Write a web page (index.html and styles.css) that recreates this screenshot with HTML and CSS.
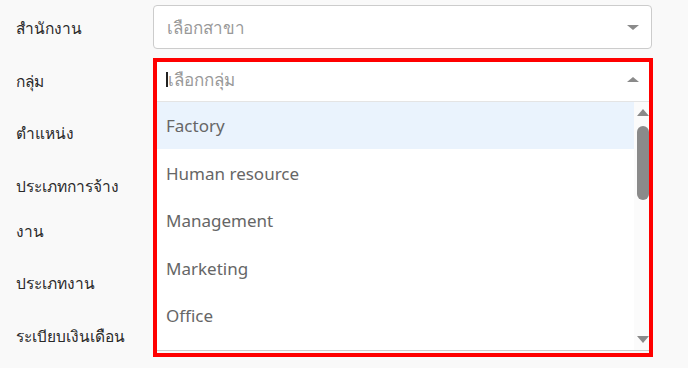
FILE: index.html
```html
<!DOCTYPE html>
<html lang="th">
<head>
<meta charset="utf-8">
<link rel="stylesheet" href="styles.css">
</head>
<body>
<div class="form">
  <div class="row">
    <div class="label">สำนักงาน</div>
    <div class="field">
      <div class="select"><span class="ph">เลือกสาขา</span><span class="caret down"></span></div>
    </div>
  </div>
  <div class="row">
    <div class="label">กลุ่ม</div>
    <div class="field open">
      <div class="select"><span class="value"><span class="cursor"></span><span class="ph">เลือกกลุ่ม</span></span><span class="caret up"></span></div>
      <div class="dropdown">
        <div class="list">
          <div class="item active">Factory</div>
          <div class="item">Human resource</div>
          <div class="item">Management</div>
          <div class="item">Marketing</div>
          <div class="item">Office</div>
        </div>
        <div class="scrollbar">
          <div class="sb-btn top"><span class="tri tri-up"></span></div>
          <div class="thumb"></div>
          <div class="sb-track"></div>
          <div class="sb-btn bottom"><span class="tri tri-down"></span></div>
        </div>
      </div>
      <div class="highlight"></div>
    </div>
  </div>
  <div class="row"><div class="label">ตำแหน่ง</div></div>
  <div class="row"><div class="label">ประเภทการจ้าง<br>งาน</div></div>
  <div class="row"><div class="label">ประเภทงาน</div></div>
  <div class="row"><div class="label">ระเบียบเงินเดือน</div></div>
</div>
</body>
</html>
```

FILE: styles.css
```css
html, body {
  margin: 0;
  background: #f9f9f9;
  font-family: "Noto Sans", "Liberation Sans", sans-serif;
}
.form {
  display: flex;
  flex-direction: column;
  gap: 6.5px;
  padding: 5px 36px 0 16px;
}
.row {
  display: flex;
  min-height: 46px;
}
.label {
  width: 137px;
  flex: none;
  font-size: 15.5px;
  line-height: 45px;
  padding-top: 1px;
  color: #2a2a2a;
}
.field {
  flex: 1;
  position: relative;
}
.select {
  height: 44px;
  box-sizing: border-box;
  border: 1px solid #cccccc;
  border-radius: 4px;
  background: #fff;
  display: flex;
  align-items: center;
  justify-content: space-between;
  padding: 0 12px 0 13px;
}
.value {
  display: flex;
  align-items: center;
}
.ph {
  color: #999;
  font-size: 17px;
}
.cursor {
  width: 2px;
  height: 15px;
  background: #222;
  margin-left: -1px;
}
.caret {
  width: 0;
  height: 0;
  border-left: 6px solid transparent;
  border-right: 6px solid transparent;
}
.caret.down { border-top: 5px solid #8a8a8a; }
.caret.up { border-bottom: 5px solid #8a8a8a; }
.open .select {
  border-radius: 4px 4px 0 0;
  border-bottom-color: #e4e4e4;
}
.dropdown {
  position: absolute;
  top: 44px;
  left: 0;
  right: 0;
  height: 249px;
  box-sizing: border-box;
  background: #fff;
  border: 1px solid #cccccc;
  border-top: none;
  display: flex;
  z-index: 2;
}
.list {
  flex: 1;
  overflow: hidden;
}
.item {
  height: 47.5px;
  box-sizing: border-box;
  display: flex;
  align-items: center;
  padding: 1px 0 0 12px;
  font-size: 17px;
  color: #666;
}
.item.active {
  background: #eaf3fd;
}
.scrollbar {
  width: 17px;
  flex: none;
  display: flex;
  flex-direction: column;
  align-items: center;
  background: #fbfbfb;
}
.sb-btn {
  display: flex;
  align-items: center;
  justify-content: center;
  width: 100%;
}
.sb-btn.top { height: 22px; }
.sb-btn.bottom { height: 21px; }
.tri {
  width: 0;
  height: 0;
  border-left: 6px solid transparent;
  border-right: 6px solid transparent;
}
.tri-up { border-bottom: 7px solid #8a8a8a; }
.tri-down { border-top: 7px solid #8a8a8a; }
.thumb {
  width: 12px;
  height: 74px;
  margin-top: 2px;
  border-radius: 6px;
  background: #8a8a8a;
}
.sb-track { flex: 1; }
.highlight {
  position: absolute;
  left: 0;
  top: 0;
  width: 500px;
  height: 299px;
  box-sizing: border-box;
  border: 4px solid #ff0000;
  z-index: 3;
  pointer-events: none;
}
```
